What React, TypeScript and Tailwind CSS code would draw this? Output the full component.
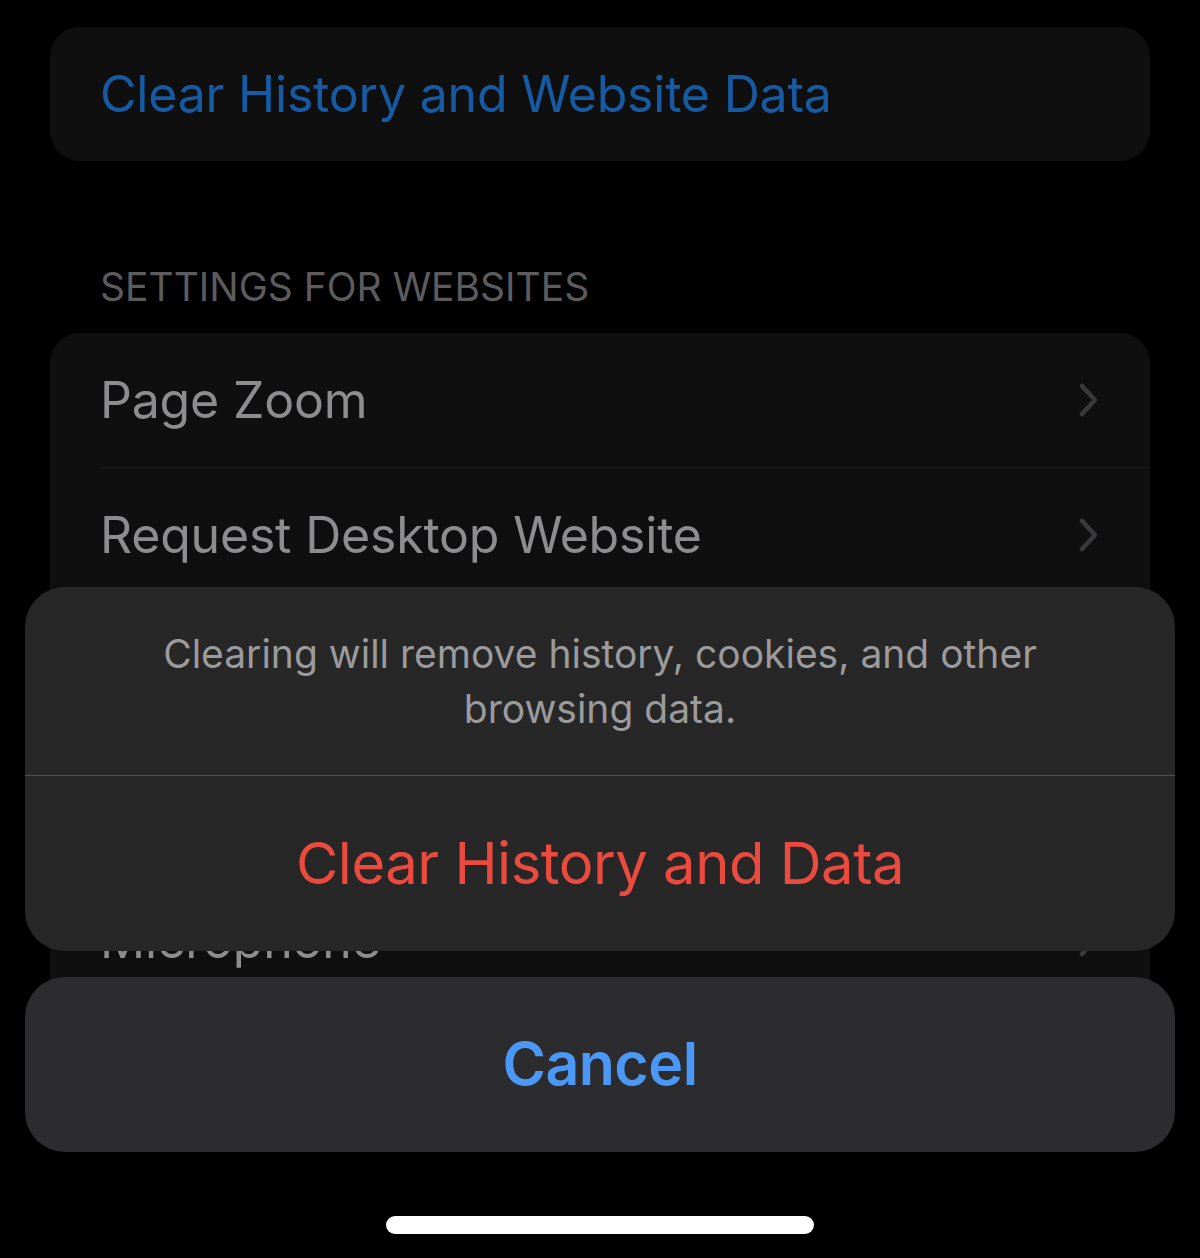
import React from 'react';

const font = { fontFamily: 'Inter, "Noto Sans", "Liberation Sans", sans-serif' };

const rows = ['Page Zoom', 'Request Desktop Website', 'Reader', 'Camera', 'Microphone', 'Location'];

function Chevron() {
  return (
    <svg width="22" height="36" viewBox="0 0 22 36" fill="none" className="shrink-0">
      <path d="M4 4 L17 18 L4 32" stroke="#3a3a3c" strokeWidth="4.5" strokeLinecap="round" strokeLinejoin="round" />
    </svg>
  );
}

function SettingsRow({ label, last }: { label: string; last: boolean }) {
  return (
    <div className="flex h-[135px] items-center pl-[50px]">
      <div
        className={`flex h-full flex-1 items-center justify-between pr-[50px] ${
          last ? '' : 'border-b border-[#1c1c1e]'
        }`}
      >
        <span className="text-[50px] tracking-[-0.2px] text-[#8d8d8f]">{label}</span>
        <Chevron />
      </div>
    </div>
  );
}

export default function App() {
  return (
    <div className="relative h-[1258px] w-full overflow-hidden bg-black" style={font}>
      {/* dimmed settings page behind the sheet */}
      <div className="px-[50px] pt-[27px]">
        <div className="flex h-[134px] items-center rounded-[30px] bg-[#0f0f10] px-[50px]">
          <span className="text-[50px] tracking-[-0.2px] text-[#165aa3]">Clear History and Website Data</span>
        </div>
        <div className="px-[50px] pt-[104px] pb-[24px] text-[39px] leading-[44px] text-[#5c5c5f]">
          SETTINGS FOR WEBSITES
        </div>
        <div className="overflow-hidden rounded-[30px] bg-[#0f0f10]">
          {rows.map((r, i) => (
            <SettingsRow key={r} label={r} last={i === rows.length - 1} />
          ))}
        </div>
      </div>

      {/* action sheet */}
      <div className="absolute left-[25px] right-[25px] top-[587px] flex flex-col gap-[26px]">
        <div className="overflow-hidden rounded-[40px] bg-[#272727]">
          <div className="flex h-[189px] items-center justify-center border-b border-[#505052] px-[50px] text-center text-[39px] leading-[55px] text-[#9b9b9d]">
            <p>
              Clearing will remove history, cookies, and other
              <br />
              browsing data.
            </p>
          </div>
          <div className="flex h-[175px] items-center justify-center text-[58px] tracking-[-0.5px] text-[#eb4b3e]">
            Clear History and Data
          </div>
        </div>
        <div className="flex h-[175px] items-center justify-center rounded-[40px] bg-[#2c2c2e] text-[59px] font-semibold tracking-[-0.5px] text-[#4b98f6]">
          Cancel
        </div>
      </div>

      {/* home indicator */}
      <div className="absolute bottom-[24px] left-1/2 h-[18px] w-[428px] -translate-x-1/2 rounded-full bg-white" />
    </div>
  );
}
